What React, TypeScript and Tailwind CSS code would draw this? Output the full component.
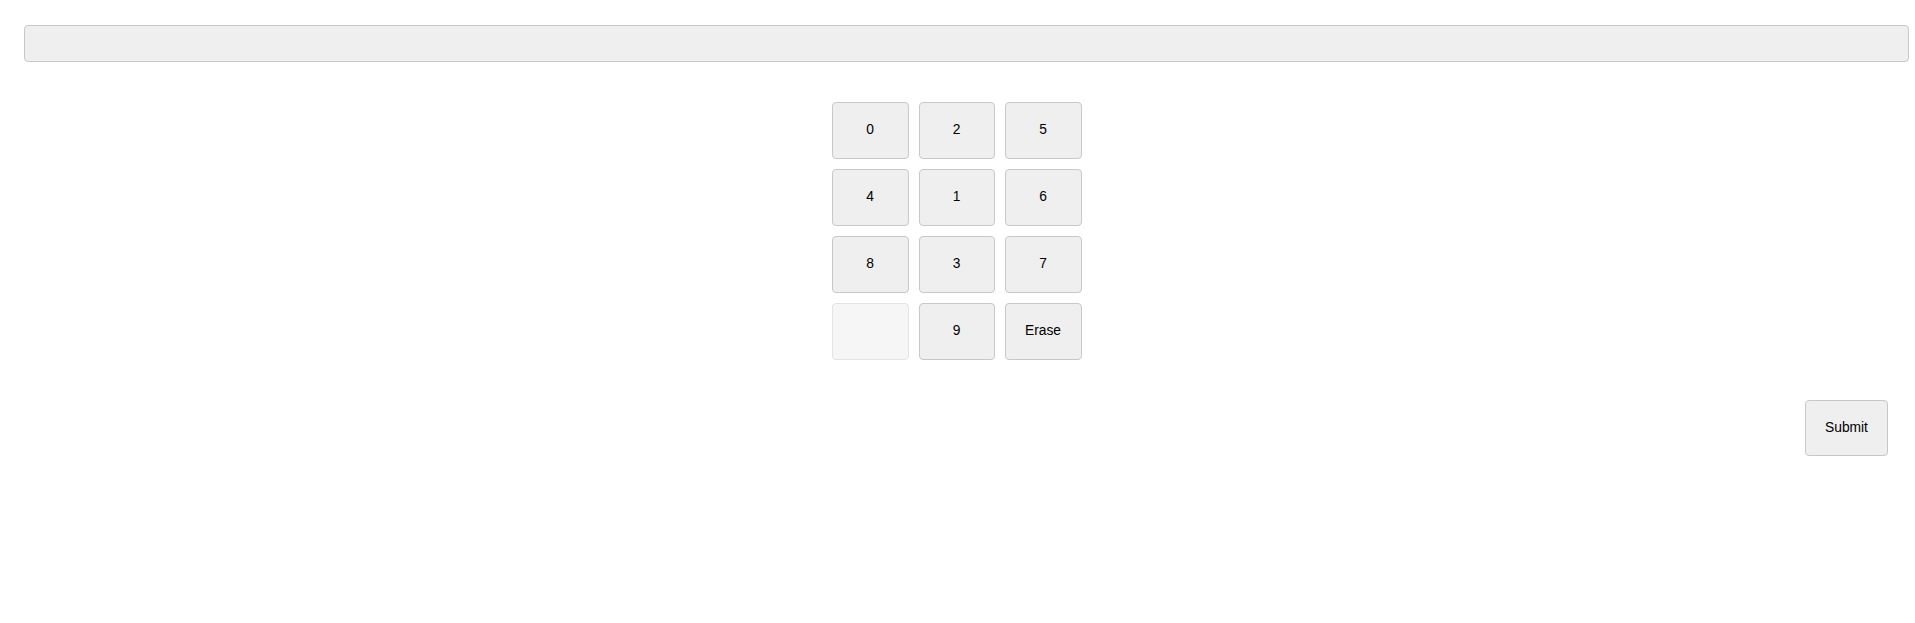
import React from "react";

const keys: (string | null)[] = ["0", "2", "5", "4", "1", "6", "8", "3", "7", null, "9", "Erase"];

export default function App() {
  return (
    <div className="w-[1915px] h-[623px] bg-white" style={{ fontFamily: '"Liberation Sans", Arial, sans-serif' }}>
      <div className="pt-[25px] pl-[24px]">
        <input
          readOnly
          className="block w-[1885px] h-[37px] bg-[#efefef] border border-[#c8c8c8] rounded-[4px] outline-none"
        />
      </div>
      <div className="mt-[40px] flex justify-center">
        <div className="grid grid-cols-[77px_76px_77px] auto-rows-[57px] gap-[10px] mr-[2px]">
          {keys.map((k, i) =>
            k === null ? (
              <button
                key={i}
                disabled
                className="bg-[#f6f6f6] border border-[#e3e3e3] rounded-[4px]"
              />
            ) : (
              <button
                key={i}
                className="bg-[#efefef] border border-[#c8c8c8] rounded-[4px] text-[13.8px] text-black"
              >
                {k}
              </button>
            )
          )}
        </div>
      </div>
      <div className="mt-[40px] flex justify-end pr-[27px]">
        <button className="w-[83px] h-[56px] bg-[#efefef] border border-[#c8c8c8] rounded-[4px] text-[13.8px] text-black">
          Submit
        </button>
      </div>
    </div>
  );
}
